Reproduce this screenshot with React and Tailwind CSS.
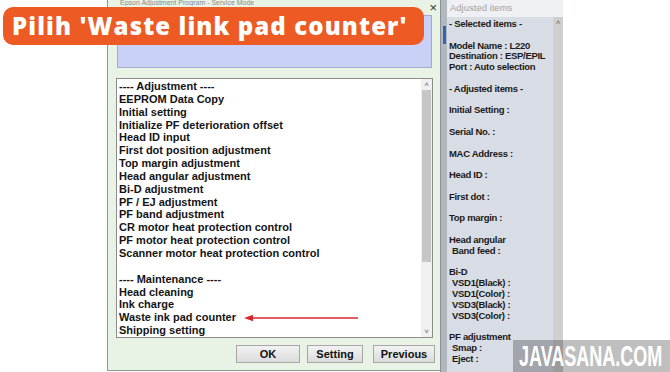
import React from 'react';

const listItems = [
  '---- Adjustment ----',
  'EEPROM Data Copy',
  'Initial setting',
  'Initialize PF deterioration offset',
  'Head ID input',
  'First dot position adjustment',
  'Top margin adjustment',
  'Head angular adjustment',
  'Bi-D adjustment',
  'PF / EJ adjustment',
  'PF band adjustment',
  'CR motor heat protection control',
  'PF motor heat protection control',
  'Scanner motor heat protection control',
  '',
  '---- Maintenance ----',
  'Head cleaning',
  'Ink charge',
  'Waste ink pad counter',
  'Shipping setting',
];

// [text, indented]
const panelLines = [
  ['- Selected items -'],
  [''],
  ['Model Name : L220'],
  ['Destination : ESP/EPIL'],
  ['Port : Auto selection'],
  [''],
  ['- Adjusted items -'],
  [''],
  ['Initial Setting :'],
  [''],
  ['Serial No. :'],
  [''],
  ['MAC Address :'],
  [''],
  ['Head ID :'],
  [''],
  ['First dot :'],
  [''],
  ['Top margin :'],
  [''],
  ['Head angular'],
  ['Band feed :', true],
  [''],
  ['Bi-D'],
  ['VSD1(Black) :', true],
  ['VSD1(Color) :', true],
  ['VSD3(Black) :', true],
  ['VSD3(Color) :', true],
  [''],
  ['PF adjustment'],
  ['Smap :', true],
  ['Eject :', true],
];

function RedArrow() {
  return (
    <svg width="116" height="8" viewBox="0 0 116 8" className="ml-[8px] shrink-0">
      <line x1="6" y1="4" x2="114" y2="4" stroke="#d8262b" strokeWidth="1.6" />
      <polygon points="0,4 9,0.8 9,7.2" fill="#d8262b" />
    </svg>
  );
}

function Button({ children, w }) {
  return (
    <div
      className={`${w} h-[18px] flex items-center justify-center border border-[#a7a7a7] bg-gradient-to-b from-[#f2f2f2] to-[#dcdcdc] text-[11px] font-bold text-[#111]`}
    >
      {children}
    </div>
  );
}

export default function App() {
  return (
    <div className="relative w-[670px] h-[372px] overflow-hidden bg-white flex font-['Liberation_Sans',Arial,sans-serif]">
      <div className="w-[107px] shrink-0" />

      {/* Service dialog */}
      <div className="w-[333px] h-[371px] shrink-0 flex flex-col bg-[#e8f2e5] border-l border-b border-[#8e9a8b]">
        <div className="h-[15px] flex items-start justify-between pl-[12px] pr-[3px]">
          <span className="text-[7px] leading-[6px] text-[#8a8a8a] truncate">Epson Adjustment Program - Service Mode</span>
          <span className="text-[13px] leading-[16px] text-[#333]">×</span>
        </div>
        <div className="ml-[9px] mr-[8px] h-[53px] bg-[#c9d2f6] border border-[#a3acd0]" />

        <div className="ml-[8px] mr-[7px] mt-[10px] h-[260px] flex bg-white border border-[#8c8c8c]">
          <div className="flex-1 pl-[2px] pt-[1px] text-[11px] leading-[12.85px] font-bold text-[#141414] overflow-hidden">
            {listItems.map((t, i) => (
              <div key={i} className="h-[12.85px] flex items-center whitespace-nowrap">
                <span>{t}</span>
                {t === 'Waste ink pad counter' && <RedArrow />}
              </div>
            ))}
          </div>
          <div className="w-[11px] flex flex-col bg-[#f0f0f0]">
            <div className="h-[11px] flex items-center justify-center text-[8px] text-[#666]">˄</div>
            <div className="mx-[1px] h-[172px] bg-[#c6c6c6]" />
            <div className="flex-1" />
            <div className="h-[11px] flex items-center justify-center text-[8px] text-[#666]">˅</div>
          </div>
        </div>

        <div className="mt-[7px] pr-[5px] flex justify-end">
          <Button w="w-[64px]">OK</Button>
          <div className="w-[7px]" />
          <Button w="w-[56px]">Setting</Button>
          <div className="w-[10px]" />
          <Button w="w-[62px]">Previous</Button>
        </div>
      </div>

      {/* Window edge behind */}
      <div className="w-[7px] shrink-0 flex flex-col bg-[#b3b7be] border-l border-[#8b9096]">
        <div className="h-[26px]" />
        <div className="ml-[2px] w-[3px] h-[18px] bg-[#2c67b1]" />
      </div>

      {/* Adjusted items panel */}
      <div className="w-[116px] shrink-0 flex flex-col">
        <div className="h-[17px] flex items-center pl-[3px] bg-[#eef0f3] text-[9.5px] text-[#a2a2a2]">Adjusted items</div>
        <div className="flex-1 flex">
          <div className="flex-1 pl-[2px] pt-[2px] bg-[#d8dce4] text-[9.5px] tracking-[-0.3px] leading-[10.8px] font-bold text-[#1a1a1a] overflow-hidden">
            {panelLines.map(([t, ind], i) => (
              <div key={i} className={`h-[10.8px] whitespace-nowrap ${ind ? 'pl-[3px]' : ''}`}>
                {t}
              </div>
            ))}
          </div>
          <div className="w-[10px] bg-[#cfcfcf] flex flex-col items-center">
            <span className="text-[8px] leading-[12px] text-[#666]">˄</span>
          </div>
        </div>
      </div>

      <div className="flex-1" />

      {/* Title banner */}
      <div className="absolute left-[3px] top-[7px] w-[421px] h-[38px] rounded-[10px] bg-[#ee5a24] flex items-center pl-[9px]">
        <span className="text-white text-[24px] font-extrabold tracking-[1.1px] font-['Open_Sans',sans-serif] leading-none">
          Pilih 'Waste link pad counter'
        </span>
      </div>

      {/* Watermark */}
      <div className="absolute right-0 bottom-0 w-[157px] h-[32px] bg-black/25 flex items-center pl-[6px] overflow-hidden">
        <span className="text-white text-[29px] font-bold leading-none origin-left scale-x-[0.62] font-['Liberation_Sans',sans-serif] whitespace-nowrap">
          JAVASANA.COM
        </span>
      </div>
    </div>
  );
}
